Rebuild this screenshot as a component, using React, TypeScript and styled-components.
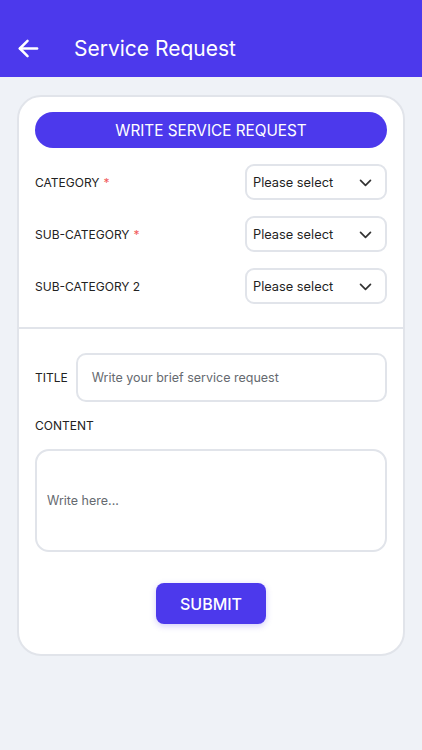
import React from "react";
import styled, { createGlobalStyle } from "styled-components";

const Global = createGlobalStyle`
  html, body { margin: 0; padding: 0; background: #eff2f7; }
  body { font-family: Inter, "Noto Sans", sans-serif; -webkit-font-smoothing: antialiased; }
  * { box-sizing: border-box; }
`;

const Page = styled.div`
  width: 422px;
  min-height: 750px;
  background: #eff2f7;
`;

const Header = styled.header`
  height: 77px;
  background: #4c39ec;
  display: flex;
  align-items: center;
  padding: 20px 0 0 17px;
  gap: 34px;
`;

const BackButton = styled.button`
  border: none;
  background: transparent;
  padding: 0;
  width: 23px;
  height: 23px;
  display: flex;
  align-items: center;
  justify-content: center;
  cursor: pointer;
`;

const Title = styled.h1`
  margin: 0;
  color: #ffffff;
  font-size: 21px;
  font-weight: 400;
`;

const Card = styled.div`
  margin: 18px 17px 0;
  background: #ffffff;
  border: 2px solid #e1e4ea;
  border-radius: 24px;
  padding-bottom: 30px;
`;

const Top = styled.div`
  padding: 15px 16px 23px;
  display: flex;
  flex-direction: column;
`;

const Banner = styled.div`
  height: 36px;
  border-radius: 18px;
  background: #4c39ec;
  color: #fff;
  font-size: 15.3px;
  display: flex;
  align-items: center;
  justify-content: center;
  margin-bottom: 16px;
`;

const SelectRow = styled.div`
  display: flex;
  align-items: center;
  justify-content: space-between;
  height: 36px;
  & + & { margin-top: 16px; }
`;

const Label = styled.span`
  font-size: 12px;
  color: #222;
`;

const Required = styled.span`
  color: #f15b5b;
  margin-left: 4px;
`;

const Select = styled.div`
  width: 142px;
  height: 36px;
  border: 2px solid #e1e4ea;
  border-radius: 9px;
  display: flex;
  align-items: center;
  justify-content: space-between;
  padding: 0 11px 0 6px;
  font-size: 12.8px;
  color: #1f1f1f;
`;

const Divider = styled.hr`
  margin: 0;
  border: none;
  height: 2px;
  background: #e1e4ea;
`;

const Bottom = styled.div`
  padding: 24px 16px 0;
  display: flex;
  flex-direction: column;
`;

const TitleRow = styled.div`
  display: flex;
  align-items: center;
  gap: 8px;
`;

const TextInput = styled.div`
  flex: 1;
  height: 49px;
  border: 2px solid #e1e4ea;
  border-radius: 10px;
  display: flex;
  align-items: center;
  padding-left: 14px;
  font-size: 12.5px;
  color: #666a70;
`;

const ContentLabel = styled(Label)`
  margin: 16px 0 16px;
  display: block;
`;

const TextArea = styled.div`
  height: 103px;
  border: 2px solid #e1e4ea;
  border-radius: 14px;
  display: flex;
  align-items: center;
  padding-left: 10px;
  font-size: 12.5px;
  color: #666a70;
`;

const SubmitWrap = styled.div`
  display: flex;
  justify-content: center;
  margin-top: 31px;
`;

const Submit = styled.button`
  width: 110px;
  height: 41px;
  border: none;
  border-radius: 8px;
  background: #4c39ec;
  color: #fff;
  font-family: inherit;
  font-size: 16px;
  font-weight: 500;
  box-shadow: 0 2px 6px rgba(76, 57, 236, 0.25);
`;

const Chevron = () => (
  <svg width="17" height="17" viewBox="0 0 24 24" fill="none" stroke="#333" strokeWidth="2.4" strokeLinecap="round" strokeLinejoin="round">
    <polyline points="5 9 12 16 19 9" />
  </svg>
);

const fields = [
  { label: "CATEGORY", required: true },
  { label: "SUB-CATEGORY", required: true },
  { label: "SUB-CATEGORY 2", required: false },
];

export default function App() {
  return (
    <Page>
      <Global />
      <Header>
        <BackButton aria-label="back">
          <svg width="23" height="23" viewBox="0 0 24 24" fill="none" stroke="#fff" strokeWidth="2.6" strokeLinecap="round" strokeLinejoin="round">
            <line x1="21" y1="12" x2="3" y2="12" />
            <polyline points="11 4 3 12 11 20" />
          </svg>
        </BackButton>
        <Title>Service Request</Title>
      </Header>
      <Card>
        <Top>
          <Banner>WRITE SERVICE REQUEST</Banner>
          {fields.map((f) => (
            <SelectRow key={f.label}>
              <Label>
                {f.label}
                {f.required && <Required>*</Required>}
              </Label>
              <Select>
                <span>Please select</span>
                <Chevron />
              </Select>
            </SelectRow>
          ))}
        </Top>
        <Divider />
        <Bottom>
          <TitleRow>
            <Label>TITLE</Label>
            <TextInput>Write your brief service request</TextInput>
          </TitleRow>
          <ContentLabel>CONTENT</ContentLabel>
          <TextArea>Write here...</TextArea>
          <SubmitWrap>
            <Submit>SUBMIT</Submit>
          </SubmitWrap>
        </Bottom>
      </Card>
    </Page>
  );
}
